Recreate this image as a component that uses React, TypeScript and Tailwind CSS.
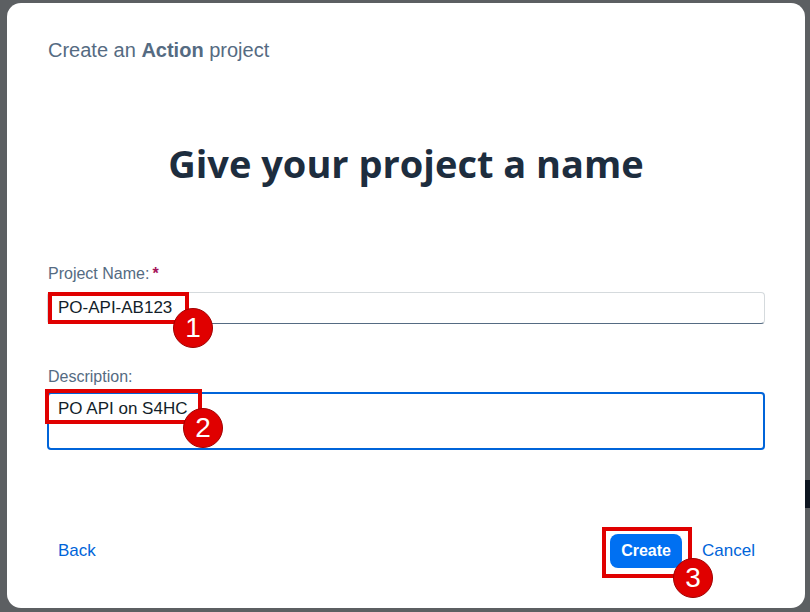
import React from "react";

function Marker({ n, className }: { n: number; className: string }) {
  return (
    <div
      className={`absolute flex h-[40px] w-[40px] items-center justify-center rounded-full border border-[#a00000] bg-[#e00000] text-[28px] leading-none text-white ${className}`}
    >
      {n}
    </div>
  );
}

export default function App() {
  return (
    <div
      className="flex h-[612px] w-[810px] bg-[#5c5f62] pb-[4px] pl-[7px] pr-[5px] pt-[3px]"
      style={{ fontFamily: '"Liberation Sans", Arial, sans-serif' }}
    >
      <div className="relative flex flex-1 flex-col rounded-[14px] bg-white px-[40px] pb-[40px] pt-[35px]">
        <div className="pl-[1px] text-[20px] leading-[24px] text-[#556b82]">
          Create an <span className="font-bold">Action</span> project
        </div>

        <h1
          className="mt-[77px] text-center text-[38px] font-bold leading-[48px] text-[#1d2d3e]"
          style={{ fontFamily: '"Open Sans", sans-serif' }}
        >
          Give your project a name
        </h1>

        <label className="mt-[77px] pl-[1px] text-[16px] leading-[20px] text-[#556b82]">
          Project Name:<span className="ml-[3px] font-bold text-[#a5135a]">*</span>
        </label>
        <div className="relative mt-[8px] h-[32px] rounded-[4px] border border-[#d5dadd] border-b-[#556b82] px-[10px] text-[17px] leading-[30px] text-[#131e29]">
          PO-API-AB123
          <div className="absolute left-[0px] top-[-1px] h-[32px] w-[141px] border-[4px] border-[#e00000]" />
          <Marker n={1} className="left-[125px] top-[15px]" />
        </div>

        <label className="mt-[43px] pl-[1px] text-[16px] leading-[20px] text-[#556b82]">
          Description:
        </label>
        <div className="relative mt-[5px] h-[58px] rounded-[4px] border-2 border-[#0064d9] px-[9px] pt-[5px] text-[17px] leading-[20px] text-[#131e29]">
          PO API on S4HC
          <div className="absolute left-[-4px] top-[-5px] h-[35px] w-[157px] border-[4px] border-[#e00000]" />
          <Marker n={2} className="left-[134px] top-[14px]" />
        </div>

        <div className="mt-auto flex items-center justify-between pl-[11px] pr-[10px]">
          <button className="text-[17px] text-[#0064d9]">Back</button>
          <div className="flex items-center gap-[20px]">
            <div className="relative">
              <button className="h-[34px] w-[72px] rounded-[8px] bg-[#0070f2] text-[16px] font-bold text-white">
                Create
              </button>
              <div className="absolute left-[-8px] top-[-7px] h-[51px] w-[90px] border-[4px] border-[#e00000]" />
              <Marker n={3} className="left-[63px] top-[24px]" />
            </div>
            <button className="text-[17px] text-[#0064d9]">Cancel</button>
          </div>
        </div>
      </div>
      <div className="absolute left-[805px] top-[480px] h-[28px] w-[5px] bg-[#0e1621]" />
    </div>
  );
}
